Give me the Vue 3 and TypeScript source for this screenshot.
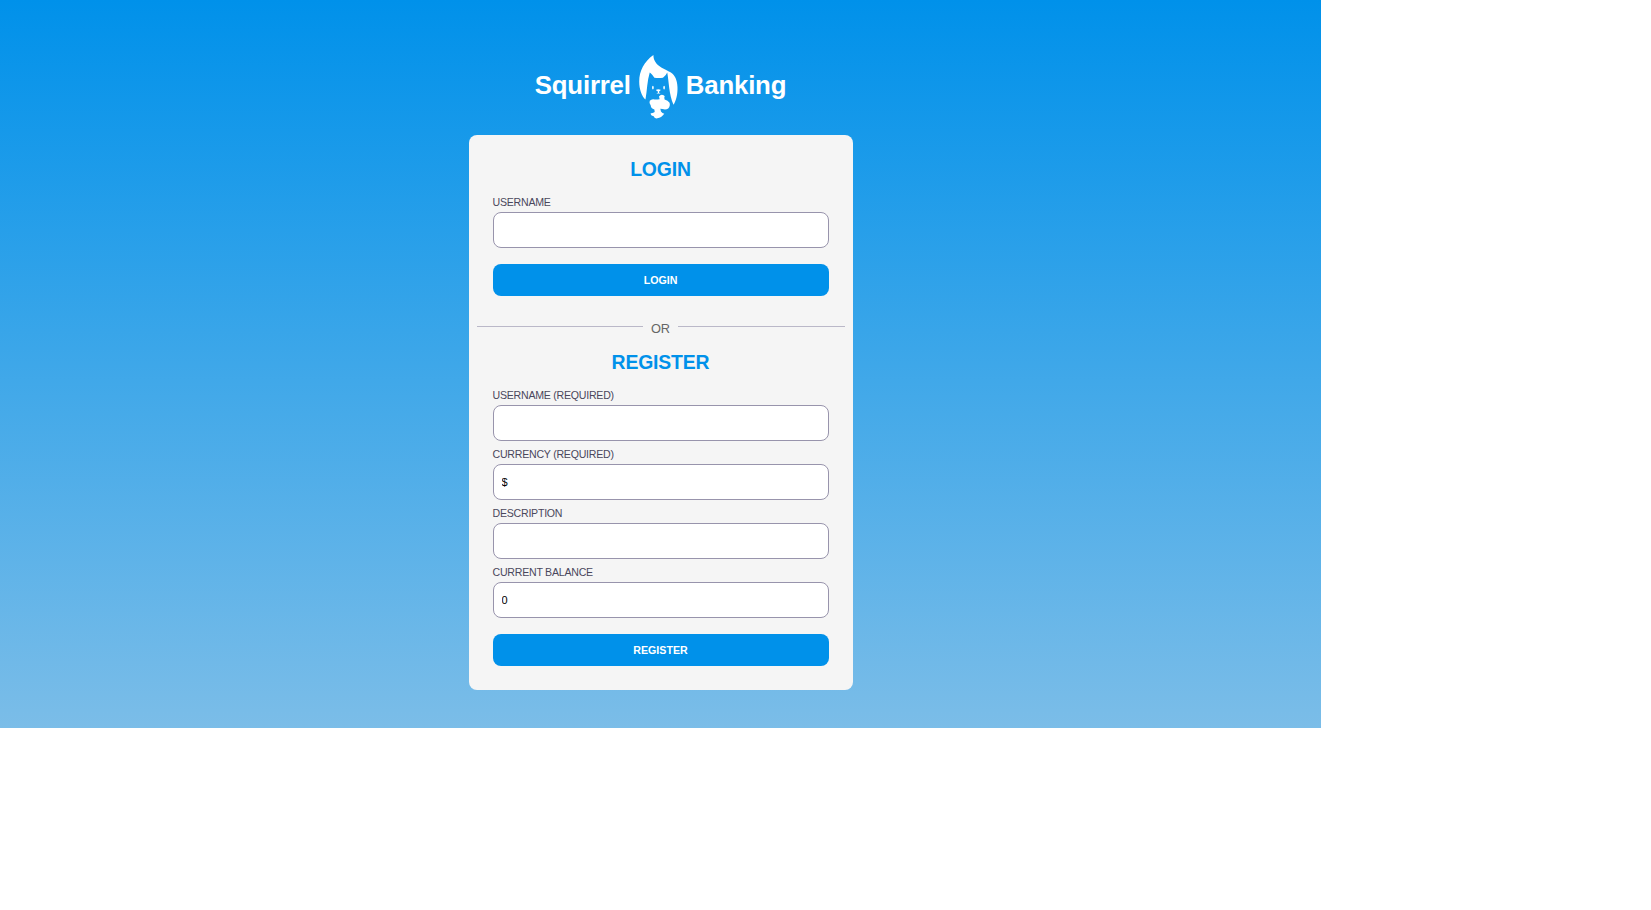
<script setup lang="ts">
import { ref } from 'vue'

interface Field {
  id: string
  label: string
  value: string
}

const loginUser = ref('')
const fields = ref<Field[]>([
  { id: 'user', label: 'Username (required)', value: '' },
  { id: 'currency', label: 'Currency (required)', value: '$' },
  { id: 'description', label: 'Description', value: '' },
  { id: 'balance', label: 'Current balance', value: '0' },
])
</script>

<template>
  <main class="page">
    <h1 class="brand">
      <span>Squirrel</span>
      <svg class="logo" viewBox="27 14 117 194" aria-hidden="true">
        <path
          d="M70 14C42 34 27 62 27 94C27 118 35 138 46 149C51 121 51 93 59 67C64 71 69 76 73 83Q86 85 99 83Q108 77 112 67C117 94 117 132 131 165C139 153 144 132 143 111C142 89 135 76 124 68C108 56 70 49 70 14Z"
        />
        <ellipse cx="68.500" cy="113" rx="2.500" ry="5.500" />
        <ellipse cx="102.500" cy="113" rx="2.500" ry="5.500" />
        <path d="M78 119Q85 116 92 119Q91 123 87 125V128L92 131L85 131L79 131L84 128V125Q79 123 78 119Z" />
        <path
          d="M87 140Q92 132 99 135Q107 138 103 143L104 149Q114 151 119 159Q122 169 115 176Q108 181 98 178L91 177L93 185Q97 190 103 192Q94 204 82 206Q73 208 71 200Q61 198 62 190Q69 191 74 187L73 179Q62 176 62 167Q56 160 59 153Q65 146 74 149Q84 149 89 148Z"
        />
      </svg>
      <span>Banking</span>
    </h1>

    <section class="card">
      <form class="form" @submit.prevent>
        <h2>Login</h2>
        <label for="login-user">Username</label>
        <input id="login-user" v-model="loginUser" type="text" />
        <button>Login</button>
      </form>
      <div class="divider"><span>OR</span></div>
      <form class="form register" @submit.prevent>
        <h2>Register</h2>
        <template v-for="field in fields" :key="field.id">
          <label :for="field.id">{{ field.label }}</label>
          <input :id="field.id" v-model="field.value" type="text" />
        </template>
        <button>Register</button>
      </form>
    </section>
  </main>
</template>

<style>
html,
body {
  background: #fff;
}
</style>

<style scoped>
.page {
  box-sizing: border-box;
  width: 1321px;
  height: 728px;
  padding-top: 55px;
  display: flex;
  flex-direction: column;
  align-items: center;
  background: linear-gradient(#0091ea, #7bbde8);
  font-family: 'Liberation Sans', Arial, sans-serif;
}
.brand {
  display: flex;
  align-items: center;
  gap: 8px;
  height: 64px;
  margin: 0 0 16px;
  color: #fff;
  font-size: 25.8px;
  letter-spacing: -0.18px;
  line-height: 30px;
}
.brand span {
  margin-bottom: 4px;
}
.logo {
  width: 39px;
  height: 64px;
  fill: #fff;
}
.card {
  box-sizing: border-box;
  width: 384px;
  height: 555px;
  padding: 24px 8px;
  border-radius: 8px;
  background: #f5f5f5;
}
.form {
  display: flex;
  flex-direction: column;
  padding: 0 16px;
}
h2 {
  margin: 0 0 14px;
  color: #0091ea;
  font-size: 19.4px;
  letter-spacing: -0.15px;
  line-height: 21px;
  text-align: center;
  text-transform: uppercase;
}
label {
  height: 18px;
  color: #4a475c;
  font-size: 10.6px;
  letter-spacing: -0.24px;
  line-height: 16px;
  text-transform: uppercase;
}
input {
  box-sizing: border-box;
  width: 100%;
  height: 36px;
  margin: 0;
  padding: 0 8px;
  border: 1px solid #9894ac;
  border-radius: 8px;
  background: #fff;
  color: #000;
  font: 11px 'Liberation Sans', Arial, sans-serif;
}
input + label {
  margin-top: 5px;
}
button {
  height: 32px;
  margin-top: 16px;
  padding: 0;
  border: 0;
  border-radius: 8px;
  background: #0091ea;
  color: #fff;
  font: bold 10.667px 'Liberation Sans', Arial, sans-serif;
  text-transform: uppercase;
}
.divider {
  display: flex;
  align-items: flex-start;
  gap: 8px;
  height: 15px;
  margin: 25px 0 16px;
  color: #666;
  font-size: 12.8px;
  line-height: 15px;
}
.divider::before,
.divider::after {
  content: '';
  flex: 1;
  height: 1px;
  margin-top: 5px;
  background: #bab8c8;
}
</style>
